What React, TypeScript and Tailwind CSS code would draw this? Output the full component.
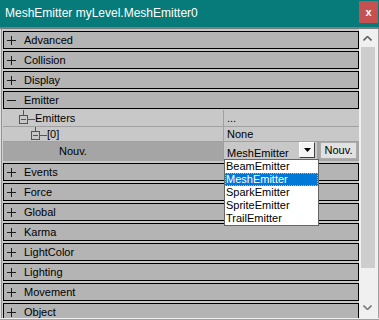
import React from "react";

const before = ["Advanced", "Collision", "Display"];
const after = ["Events", "Force", "Global", "Karma", "LightColor", "Lighting", "Movement", "Object"];
const emitterTypes = ["BeamEmitter", "MeshEmitter", "SparkEmitter", "SpriteEmitter", "TrailEmitter"];

function PlusMinus({ open }: { open?: boolean }) {
  return (
    <svg width="9" height="9" viewBox="0 0 9 9" shapeRendering="crispEdges" className="shrink-0">
      <path d="M0 4.5H9" stroke="#1c1c1c" />
      {!open && <path d="M4.5 0V9" stroke="#1c1c1c" />}
    </svg>
  );
}

function Category({ label, open }: { label: string; open?: boolean }) {
  return (
    <div className="mt-[2px] flex h-[18px] shrink-0 items-center border border-black bg-[#b4b4b4]">
      <div className="ml-[3px] flex">
        <PlusMinus open={open} />
      </div>
      <span className="ml-[8px] text-[11px] leading-none text-black">{label}</span>
    </div>
  );
}

function Chevron({ down }: { down?: boolean }) {
  return (
    <svg width="9" height="5" viewBox="0 0 9 5">
      <polyline
        points={down ? "0.5,0.5 4.5,4.5 8.5,0.5" : "0.5,4.5 4.5,0.5 8.5,4.5"}
        fill="none"
        stroke={down ? "#7a7a7a" : "#606060"}
        strokeWidth="1.6"
      />
    </svg>
  );
}

export default function App() {
  return (
    <div className="flex h-[320px] w-[379px] flex-col overflow-hidden bg-[#c8c8c8] font-['Liberation_Sans',Arial,sans-serif]">
      {/* title bar */}
      <div className="flex h-[27px] shrink-0 items-start bg-[#077a7a]">
        <span className="ml-[5px] mt-[6px] text-[12px] leading-[14px] text-white">
          MeshEmitter myLevel.MeshEmitter0
        </span>
        <div className="ml-auto mr-[1px] mt-[1px] flex h-[22px] w-[19px] items-center justify-center bg-[#c75050] text-[11px] font-bold leading-none text-white">
          x
        </div>
      </div>
      <div className="h-[2px] shrink-0 bg-[#7a7d7d]" />

      {/* body */}
      <div className="flex min-h-0 flex-1">
        <div className="flex w-[3px] shrink-0">
          <div className="w-[1px] bg-[#e0e0e0]" />
          <div className="w-[1px] bg-[#909090]" />
          <div className="w-[1px] bg-[#d0d0d0]" />
        </div>

        <div className="flex w-[356px] shrink-0 flex-col">
          {before.map((c) => (
            <Category key={c} label={c} />
          ))}
          <Category label="Emitter" open />

          {/* expanded emitter */}
          <div className="mt-[1px] flex shrink-0 flex-col text-[11px] leading-none text-black">
            <div className="flex h-[17px] border-b border-[#a0a0a0] bg-[#c8c8c8]">
              <div className="flex w-[221px] items-center border-r border-[#a0a0a0]">
                <svg width="32" height="16" viewBox="0 0 32 16" shapeRendering="crispEdges" className="shrink-0">
                  <path d="M20.5 0V5" stroke="#555" />
                  <rect x="16.5" y="5.5" width="8" height="8" fill="none" stroke="#555" />
                  <path d="M18 9.5H23" stroke="#555" />
                  <path d="M25 9.5H32" stroke="#555" />
                </svg>
                <span>Emitters</span>
              </div>
              <div className="flex items-center pl-[3px]">...</div>
            </div>

            <div className="flex h-[15px] border-b border-[#a0a0a0] bg-[#c8c8c8]">
              <div className="flex w-[221px] items-center border-r border-[#a0a0a0]">
                <svg width="44" height="14" viewBox="0 0 44 14" shapeRendering="crispEdges" className="shrink-0">
                  <path d="M32.5 0V4" stroke="#555" />
                  <rect x="28.5" y="4.5" width="8" height="8" fill="none" stroke="#555" />
                  <path d="M30 8.5H35" stroke="#555" />
                  <path d="M37 8.5H44" stroke="#555" />
                </svg>
                <span>[0]</span>
              </div>
              <div className="flex items-center pl-[3px]">None</div>
            </div>

            <div className="flex h-[19px] bg-[#a5a5a5]">
              <div className="flex w-[221px] items-center border-r border-[#a0a0a0] pl-[56px]">Nouv.</div>
              <div className="relative flex">
                <div className="flex h-[19px] w-[93px] items-start bg-[#c8c8c8]">
                  <span className="mt-[6px] pl-[3px]">MeshEmitter</span>
                  <div className="ml-auto mr-[2px] flex h-[16px] w-[16px] items-center justify-center border border-b-[#404040] border-l-white border-r-[#404040] border-t-white bg-[#f4f4f4]">
                    <svg width="7" height="4" viewBox="0 0 7 4">
                      <polygon points="0,0 7,0 3.5,4" fill="#000" />
                    </svg>
                  </div>
                </div>
                <div className="ml-[3px] flex h-[17px] w-[37px] items-center justify-center border border-[#adadad] bg-[#e1e1e1]">
                  Nouv.
                </div>

                {/* dropdown list */}
                <div className="absolute left-0 top-[17px] z-10 flex w-[95px] flex-col border border-[#646464] bg-white">
                  {emitterTypes.map((t) => (
                    <div
                      key={t}
                      className={
                        t === "MeshEmitter"
                          ? "flex h-[13px] items-center bg-[#0078d7] pl-[1px] text-white outline-1 -outline-offset-1 outline-dotted outline-[#f0b040]"
                          : "flex h-[13px] items-center pl-[1px] text-black"
                      }
                    >
                      {t}
                    </div>
                  ))}
                </div>
              </div>
            </div>
          </div>

          {after.map((c) => (
            <Category key={c} label={c} />
          ))}
        </div>

        {/* scrollbar */}
        <div className="flex w-[17px] shrink-0 flex-col bg-[#f0f0f0]">
          <div className="flex h-[18px] shrink-0 items-center justify-center">
            <Chevron />
          </div>
          <div className="ml-[2px] h-[221px] w-[14px] shrink-0 bg-[#cdcdcd]" />
          <div className="flex flex-1 items-end justify-center pb-[8px]">
            <Chevron down />
          </div>
        </div>
        <div className="w-[3px] shrink-0 border-r border-[#a0a0a0] bg-[#f0f0f0]" />
      </div>
      <div className="h-[2px] shrink-0 border-b border-[#a0a0a0] bg-[#f0f0f0]" />
    </div>
  );
}
